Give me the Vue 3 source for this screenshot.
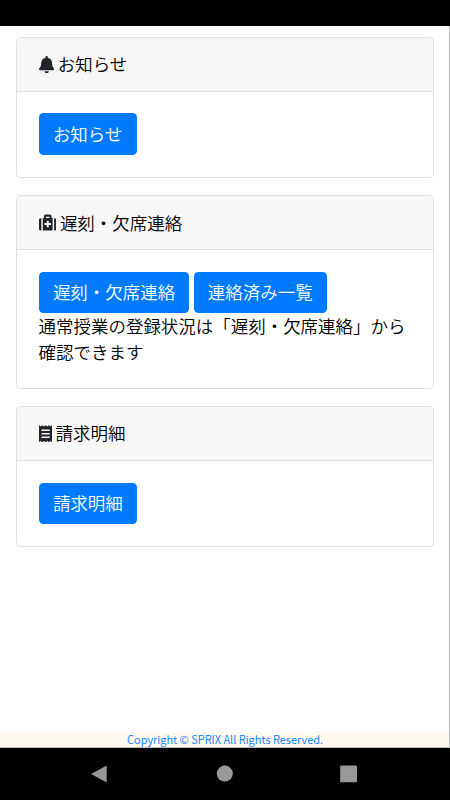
<script setup>
const cards = [
  {
    title: 'お知らせ',
    icon: {
      name: 'bell',
      box: '0 0 448 512',
      path: 'M224 512c35.32 0 63.97-28.65 63.97-64H160.03c0 35.35 28.65 64 63.97 64zm215.39-149.71c-19.32-20.76-55.47-51.99-55.47-154.29 0-77.7-54.48-139.9-127.94-155.16V32c0-17.67-14.32-32-31.98-32s-31.98 14.33-31.98 32v20.84C118.56 68.1 64.08 130.3 64.08 208c0 102.3-36.15 133.53-55.47 154.29-6 6.45-8.66 14.16-8.61 21.71.11 16.4 12.98 32 32.1 32h383.8c19.12 0 32-15.6 32.1-32 .05-7.55-2.61-15.27-8.61-21.71z',
    },
    buttons: ['お知らせ'],
  },
  {
    title: '遅刻・欠席連絡',
    icon: {
      name: 'medkit',
      box: '0 0 512 512',
      path: 'M112 488h288V116h-32V64c0-26.51-21.49-48-48-48H192c-26.51 0-48 21.49-48 48v52H112v372zm92-408h104v36H204V80zm308 92v268c0 26.51-21.49 48-48 48h-20V124h20c26.51 0 48 21.49 48 48zM68 488H48c-26.51 0-48-21.49-48-48V172c0-26.51 21.49-48 48-48h20v364zM352 276v40c0 6-4 10-10 10h-56v56c0 6-4 10-10 10h-40c-6 0-10-4-10-10v-56h-56c-6 0-10-4-10-10v-40c0-6 4-10 10-10h56v-56c0-6 4-10 10-10h40c6 0 10 4 10 10v56h56c6 0 10 4 10 10z',
    },
    buttons: ['遅刻・欠席連絡', '連絡済み一覧'],
    note: '通常授業の登録状況は「遅刻・欠席連絡」から確認できます',
  },
  {
    title: '請求明細',
    icon: {
      name: 'receipt',
      box: '0 0 384 512',
      path: 'M0 0L48 44 96 4l48 40 48-40 48 40 48-40 48 40L384 0v512l-48-44-48 40-48-40-48 40-48-40-48 40-48-40L0 512zM72 132v44h240v-44zm0 102v44h240v-44zm0 102v44h240v-44z',
    },
    buttons: ['請求明細'],
  },
]
</script>

<template>
  <div class="screen">
    <div class="status-bar"></div>
    <div class="view">
      <main class="cards">
        <section v-for="card in cards" :key="card.title" class="card">
          <header class="card-header">
            <svg :class="['icon', card.icon.name]" :viewBox="card.icon.box" aria-hidden="true">
              <path fill-rule="evenodd" :d="card.icon.path" />
            </svg>
            <span>{{ card.title }}</span>
          </header>
          <div class="card-body">
            <div class="buttons">
              <button v-for="label in card.buttons" :key="label" type="button" class="btn">{{ label }}</button>
            </div>
            <p v-if="card.note" class="note">{{ card.note }}</p>
          </div>
        </section>
      </main>
      <footer class="footer">Copyright © SPRIX All Rights Reserved.</footer>
    </div>
    <nav class="nav-bar">
      <svg class="nav-icon" viewBox="0 0 20 20"><path d="M16.7 1.4v17.2L1 10z" /></svg>
      <svg class="nav-icon" viewBox="0 0 20 20"><circle cx="9.8" cy="9.6" r="8" /></svg>
      <svg class="nav-icon" viewBox="0 0 20 20"><rect x="1.2" y="1.4" width="16.8" height="16.8" rx="1" /></svg>
    </nav>
  </div>
</template>

<style>
body {
  margin: 0;
  background: #fff;
}
</style>

<style scoped>
.screen {
  display: flex;
  flex-direction: column;
  width: 450px;
  height: 800px;
  box-sizing: border-box;
  overflow: hidden;
  background: #fff;
  color: #000;
  font: 350 17.48px/26.2px "Noto Sans CJK JP DemiLight", "Noto Sans CJK JP", sans-serif;
}
.status-bar {
  flex: none;
  height: 26px;
  background: #000;
}
.view {
  flex: 1;
  display: flex;
  flex-direction: column;
  justify-content: space-between;
  border-right: 1px solid #bdbdbd;
  border-bottom: 1px solid #bdb9b0;
}
.cards {
  display: flex;
  flex-direction: column;
  gap: 17.5px;
  padding: 11px 15.4px 0 15.7px;
}
.card {
  border: 1px solid #dfdfdf;
  border-radius: 4.4px;
  overflow: hidden;
}
.card-header {
  display: flex;
  align-items: center;
  gap: 3.9px;
  height: 52.5px;
  padding: 0 21.9px;
  background: #f7f7f7;
  border-bottom: 1px solid #dfdfdf;
}
.icon {
  flex: none;
  height: 17.45px;
  fill: #212529;
}
.bell {
  width: 15.3px;
}
.medkit {
  width: 17.45px;
}
.receipt {
  width: 13.1px;
}
.card-body {
  padding: 21.9px 21.9px 22px;
}
.buttons {
  display: flex;
  gap: 4.1px;
}
.btn {
  height: 41.5px;
  padding: 0 14.3px;
  border: 0;
  border-radius: 4.4px;
  background: #007bff;
  color: #fff;
  font: inherit;
}
.note {
  margin: 0;
}
.footer {
  height: 15px;
  padding-left: 1px;
  background: #fffaf0;
  color: #007bff;
  font-size: 11.05px;
  line-height: 15px;
  text-align: center;
}
.nav-bar {
  flex: none;
  display: flex;
  justify-content: space-between;
  align-items: center;
  height: 52px;
  padding: 0 91px 0 90px;
  box-sizing: border-box;
  background: #000;
}
.nav-icon {
  width: 20px;
  height: 20px;
  fill: #999;
}
</style>
